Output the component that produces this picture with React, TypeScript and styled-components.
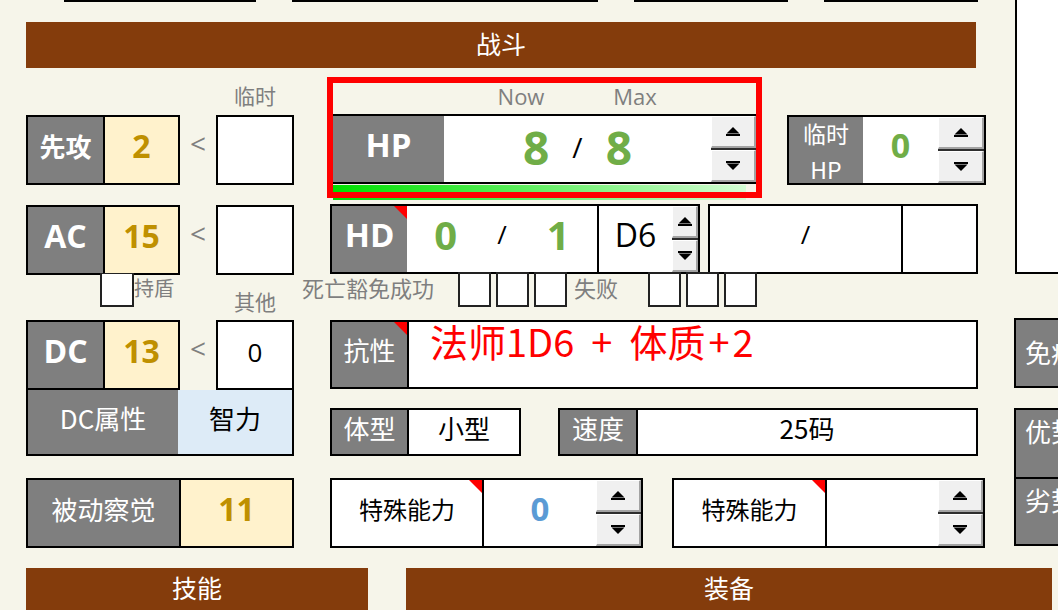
import React from "react";
import styled, { createGlobalStyle } from "styled-components";

const CJK = `"Noto Sans CJK SC", "Noto Sans", sans-serif`;
const LATIN = `"Open Sans", "Noto Sans CJK SC", sans-serif`;

const GREY = "#7f7f7f";
const BROWN = "#843c0c";

const GlobalStyle = createGlobalStyle`
  html, body {
    margin: 0;
    padding: 0;
    background: #f6f5ea;
  }
  * {
    box-sizing: border-box;
  }
`;

const Page = styled.div`
  width: 1058px;
  height: 610px;
  overflow: hidden;
  background: #f6f5ea;
  font-family: ${CJK};
  display: flex;
  flex-direction: column;
`;

const Upper = styled.div`
  display: flex;
  height: 568px;
`;

const Main = styled.div`
  width: 1014px;
  flex-shrink: 0;
  display: flex;
  flex-direction: column;
`;

const RuleStrip = styled.div`
  display: flex;
  gap: 36px;
  padding-left: 64px;
  height: 2px;
`;

const Rule = styled.div<{ $w: number }>`
  width: ${(p) => p.$w}px;
  height: 2px;
  background: #000;
`;

const SectionBar = styled.div<{ $w: number }>`
  width: ${(p) => p.$w}px;
  height: 100%;
  padding-bottom: 4px;
  background: ${BROWN};
  color: #fff;
  font-size: 25px;
  display: flex;
  align-items: center;
  justify-content: center;
`;

const CombatBar = styled.div`
  margin: 20px 0 0 26px;
  height: 46px;
  display: flex;
`;

const Combat = styled.div`
  display: flex;
  align-items: flex-start;
`;

const LeftCol = styled.div`
  margin-left: 26px;
  width: 268px;
  display: flex;
  flex-direction: column;
`;

const MidCol = styled.div`
  margin-left: 33px;
  display: flex;
  flex-direction: column;
`;

const Caption = styled.div`
  height: 47px;
  display: flex;
  align-items: flex-end;
  padding: 0 0 8px 190px;
  span {
    width: 78px;
    text-align: center;
  }
`;

const GreyText = styled.span<{ $size?: number }>`
  color: ${GREY};
  font-size: ${(p) => p.$size ?? 21}px;
  line-height: 24px;
  white-space: nowrap;
`;

const StatRow = styled.div<{ $top?: number }>`
  display: flex;
  height: 70px;
  margin-top: ${(p) => p.$top ?? 0}px;
`;

const Frame = styled.div<{ $w: number }>`
  width: ${(p) => p.$w}px;
  border: 2px solid #000;
  display: flex;
  flex-shrink: 0;
`;

const Label = styled.div<{ $w: number; $bold?: boolean; $latin?: boolean; $size?: number }>`
  position: relative;
  width: ${(p) => p.$w}px;
  flex-shrink: 0;
  padding-bottom: 10px;
  background: ${GREY};
  color: #fff;
  display: flex;
  align-items: center;
  justify-content: center;
  font-family: ${(p) => (p.$latin ? LATIN : CJK)};
  font-weight: ${(p) => (p.$bold ? 700 : 400)};
  font-size: ${(p) => p.$size ?? 26}px;
`;

const Value = styled.div<{
  $bg?: string;
  $color?: string;
  $size?: number;
  $bold?: boolean;
  $latin?: boolean;
  $w?: number;
  $line?: boolean;
}>`
  position: relative;
  ${(p) => (p.$w ? `width: ${p.$w}px; flex-shrink: 0;` : "flex: 1;")}
  padding-bottom: 10px;
  background: ${(p) => p.$bg ?? "#fff"};
  color: ${(p) => p.$color ?? "#000"};
  font-family: ${(p) => (p.$latin ? LATIN : CJK)};
  font-weight: ${(p) => (p.$bold ? 700 : 400)};
  font-size: ${(p) => p.$size ?? 26}px;
  border-left: ${(p) => (p.$line === false ? "none" : "2px solid #000")};
  display: flex;
  align-items: center;
  justify-content: center;
`;

const Lt = styled.div`
  width: 36px;
  padding-bottom: 14px;
  display: flex;
  align-items: center;
  justify-content: center;
  color: ${GREY};
  font-family: ${LATIN};
  font-size: 28px;
`;

const TempBox = styled.div`
  width: 78px;
  padding-bottom: 6px;
  border: 2px solid #000;
  background: #fff;
  display: flex;
  align-items: center;
  justify-content: center;
  font-family: ${LATIN};
  font-size: 26px;
`;

const ShieldRow = styled.div`
  margin-top: -3px;
  height: 48px;
  display: flex;
`;

const Check = styled.div`
  width: 33px;
  height: 35px;
  border: 2px solid #222;
  background: #fff;
  flex-shrink: 0;
`;

const ShieldCheck = styled(Check)`
  margin-left: 74px;
  width: 34px;
`;

const ShieldLabel = styled(GreyText)`
  width: 82px;
  margin-top: 4px;
`;

const OtherLabel = styled(GreyText)`
  width: 78px;
  text-align: center;
  align-self: flex-end;
  margin-bottom: 7px;
`;

const AttrRow = styled.div`
  width: 268px;
  height: 66px;
  border: 2px solid #000;
  border-top: none;
  display: flex;
`;

const PassiveRow = styled(Frame)`
  margin-top: 22px;
  height: 70px;
`;

const HPRowWrap = styled.div`
  margin-top: 9px;
  display: flex;
  align-items: flex-start;
`;

const HPFrame = styled.div`
  position: relative;
  width: 435px;
  height: 121px;
  padding: 6px 0 0 6px;
`;

const RedOutline = styled.div`
  position: absolute;
  inset: 0;
  border: 6px solid #ff0000;
  pointer-events: none;
`;

const HeadRow = styled.div`
  height: 31px;
  padding-bottom: 6px;
  display: flex;
  align-items: center;
`;

const HeadLabel = styled(GreyText)<{ $left: number }>`
  width: 60px;
  margin-left: ${(p) => p.$left}px;
  text-align: center;
  font-family: ${LATIN};
  font-size: 22px;
`;

const HPBar = styled.div`
  width: 423px;
  height: 70px;
  border-top: 2px solid #000;
  border-bottom: 2px solid #000;
  display: flex;
`;

const Fraction = styled.div<{ $gap: number; $drop?: number }>`
  display: flex;
  align-items: center;
  gap: ${(p) => p.$gap}px;
  margin-top: ${(p) => p.$drop ?? 0}px;
`;

const Slash = styled.span<{ $size: number }>`
  color: #000;
  font-weight: 400;
  font-size: ${(p) => p.$size}px;
`;

const LifeBar = styled.div`
  margin-top: 1px;
  width: 413px;
  height: 15px;
  background: linear-gradient(to right, #00e000, #5cee5c 45%, #d4fdd4);
`;

const TempHPBox = styled(Frame)`
  margin: 38px 0 0 25px;
  height: 70px;
`;

const TwoLine = styled(Label)`
  flex-direction: column;
  padding: 1px 0 0;
  font-size: 23px;
  line-height: 36px;
`;

const RowLine = styled.div<{ $top: number; $h: number }>`
  margin: ${(p) => p.$top}px 0 0 3px;
  height: ${(p) => p.$h}px;
  display: flex;
`;

const DeathRow = styled.div`
  margin-top: -2px;
  height: 35px;
  display: flex;
  align-items: center;
`;

const Checks = styled.div<{ $left: number }>`
  display: flex;
  gap: 5px;
  margin-left: ${(p) => p.$left}px;
`;

const DeathLabel = styled(GreyText)`
  margin: 0 0 6px -25px;
  width: 132px;
  font-size: 22px;
`;

const FailLabel = styled(GreyText)`
  margin: 0 0 6px 7px;
  width: 44px;
  font-size: 22px;
`;

const ResistText = styled(Value)`
  justify-content: flex-start;
  align-items: flex-start;
  padding: 1px 0 0 21px;
  font-size: 38px;
  line-height: 36px;
`;

const Plus = styled.span<{ $gap: number }>`
  margin: 0 ${(p) => p.$gap}px;
`;

const Corner = styled.span`
  position: absolute;
  top: 0;
  right: 0;
  width: 0;
  height: 0;
  border-top: 13px solid #ff0000;
  border-left: 13px solid transparent;
`;

const WhiteLabel = styled(Label)`
  background: #fff;
  color: #000;
  font-size: 24px;
`;

const Spinner = styled.div<{ $w: number }>`
  width: ${(p) => p.$w}px;
  flex-shrink: 0;
  display: flex;
  flex-direction: column;
  background: #f0f0f0;
`;

const SpinButton = styled.div`
  flex: 1;
  display: flex;
  align-items: center;
  justify-content: center;
  background: #f0f0f0;
  border-top: 1px solid #ffffff;
  border-left: 1px solid #ffffff;
  border-right: 2px solid #a3a3a3;
  border-bottom: 2px solid #a3a3a3;
`;

const SpinSep = styled.div`
  height: 2px;
  background: #2e2e2e;
`;

const RightCol = styled.div`
  width: 130px;
  flex-shrink: 0;
  display: flex;
  flex-direction: column;
`;

const SheetEdge = styled.div`
  height: 274px;
  margin-left: 1px;
  background: #fff;
  border-left: 2px solid #000;
  border-bottom: 2px solid #000;
`;

const SideTag = styled.div<{ $top?: number; $h: number; $align?: string }>`
  margin-top: ${(p) => p.$top ?? 0}px;
  height: ${(p) => p.$h}px;
  background: ${GREY};
  color: #fff;
  font-size: 26px;
  line-height: 30px;
  display: flex;
  align-items: ${(p) => p.$align ?? "center"};
  padding: ${(p) => (p.$align ? "6px 0 0 9px" : "0 0 2px 9px")};
`;

const SideStack = styled.div`
  margin-top: 20px;
  border: 2px solid #000;
  display: flex;
  flex-direction: column;
  ${SideTag} + ${SideTag} {
    border-top: 2px solid #000;
  }
`;

const ImmuneTag = styled(SideTag)`
  border: 2px solid #000;
`;

const BottomBars = styled.div`
  height: 42px;
  display: flex;
  gap: 38px;
  padding-left: 26px;
`;

const UpIcon = () => (
  <svg width="14" height="9" viewBox="0 0 14 9">
    <polygon points="7,0 13.5,6.5 0.5,6.5" fill="#000" />
    <rect x="0" y="7" width="14" height="2" fill="#000" />
  </svg>
);

const DownIcon = () => (
  <svg width="14" height="9" viewBox="0 0 14 9">
    <rect x="0" y="0" width="14" height="2" fill="#000" />
    <polygon points="0.5,2.5 13.5,2.5 7,9" fill="#000" />
  </svg>
);

const Spin = ({ w }: { w: number }) => (
  <Spinner $w={w}>
    <SpinButton>
      <UpIcon />
    </SpinButton>
    <SpinSep />
    <SpinButton>
      <DownIcon />
    </SpinButton>
  </Spinner>
);

const GOLD = "#bf9000";
const CREAM = "#fff2cc";
const GREEN = "#70ad47";

type StatProps = { label: string; value: string; temp?: string; top?: number; latin?: boolean };

const Stat = ({ label, value, temp, top, latin }: StatProps) => (
  <StatRow $top={top}>
    <Frame $w={154}>
      <Label $w={75} $bold $latin={latin} $size={latin ? 32 : 26}>
        {label}
      </Label>
      <Value $bg={CREAM} $color={GOLD} $bold $latin $size={32}>
        {value}
      </Value>
    </Frame>
    <Lt>&lt;</Lt>
    <TempBox>{temp}</TempBox>
  </StatRow>
);

const App = () => {
  return (
    <Page>
      <GlobalStyle />
      <Upper>
        <Main>
          <RuleStrip>
            <Rule $w={192} />
            <Rule $w={306} />
            <Rule $w={154} />
            <Rule $w={154} />
          </RuleStrip>
          <CombatBar>
            <SectionBar $w={950}>战斗</SectionBar>
          </CombatBar>
          <Combat>
            <LeftCol>
              <Caption>
                <GreyText>临时</GreyText>
              </Caption>
              <Stat label="先攻" value="2" />
              <Stat label="AC" value="15" latin top={20} />
              <ShieldRow>
                <ShieldCheck />
                <ShieldLabel $size={20}>持盾</ShieldLabel>
                <OtherLabel>其他</OtherLabel>
              </ShieldRow>
              <Stat label="DC" value="13" temp="0" latin />
              <AttrRow>
                <Label $w={150}>DC属性</Label>
                <Value $bg="#ddebf7" $line={false}>
                  智力
                </Value>
              </AttrRow>
              <PassiveRow $w={268}>
                <Label $w={151}>被动察觉</Label>
                <Value $bg={CREAM} $color={GOLD} $bold $latin $size={32}>
                  11
                </Value>
              </PassiveRow>
            </LeftCol>

            <MidCol>
              <HPRowWrap>
                <HPFrame>
                  <HeadRow>
                    <HeadLabel $left={158}>Now</HeadLabel>
                    <HeadLabel $left={54}>Max</HeadLabel>
                  </HeadRow>
                  <HPBar>
                    <Label $w={111} $bold $latin $size={33}>
                      HP
                    </Label>
                    <Value $color={GREEN} $bold $latin $size={46} $line={false}>
                      <Fraction $gap={23} $drop={6}>
                        <span>8</span>
                        <Slash $size={28}>/</Slash>
                        <span>8</span>
                      </Fraction>
                    </Value>
                    <Spin w={45} />
                  </HPBar>
                  <LifeBar />
                  <RedOutline />
                </HPFrame>
                <TempHPBox $w={199}>
                  <TwoLine $w={74}>
                    <span>临时</span>
                    <span>HP</span>
                  </TwoLine>
                  <Value $w={75} $color={GREEN} $bold $latin $size={34} $line={false}>
                    0
                  </Value>
                  <Spin w={46} />
                </TempHPBox>
              </HPRowWrap>

              <RowLine $top={6} $h={70}>
                <Frame $w={370}>
                  <Label $w={75} $bold $latin $size={33}>
                    HD
                    <Corner />
                  </Label>
                  <Value $w={190} $color={GREEN} $bold $latin $size={40} $line={false}>
                    <Fraction $gap={40}>
                      <span>0</span>
                      <Slash $size={26}>/</Slash>
                      <span>1</span>
                    </Fraction>
                  </Value>
                  <Value $w={75} $latin $size={32}>
                    D6
                  </Value>
                  <Spin w={26} />
                </Frame>
                <Frame $w={270} style={{ marginLeft: 8 }}>
                  <Value $w={191} $latin $size={26} $line={false}>
                    /
                  </Value>
                  <Value />
                </Frame>
              </RowLine>

              <DeathRow>
                <DeathLabel>死亡豁免成功</DeathLabel>
                <Checks $left={24}>
                  <Check />
                  <Check />
                  <Check />
                </Checks>
                <FailLabel>失败</FailLabel>
                <Checks $left={30}>
                  <Check />
                  <Check />
                  <Check />
                </Checks>
              </DeathRow>

              <RowLine $top={13} $h={69}>
                <Frame $w={648}>
                  <Label $w={75}>
                    抗性
                    <Corner />
                  </Label>
                  <ResistText $color="#ff0000">
                    法师1D6<Plus $gap={17}>+</Plus>体质<Plus $gap={3}>+</Plus>2
                  </ResistText>
                </Frame>
              </RowLine>

              <RowLine $top={19} $h={48}>
                <Frame $w={191}>
                  <Label $w={75}>体型</Label>
                  <Value>小型</Value>
                </Frame>
                <Frame $w={420} style={{ marginLeft: 37 }}>
                  <Label $w={76}>速度</Label>
                  <Value>25码</Value>
                </Frame>
              </RowLine>

              <RowLine $top={22} $h={70}>
                <Frame $w={313}>
                  <WhiteLabel $w={150}>
                    特殊能力
                    <Corner />
                  </WhiteLabel>
                  <Value $w={114} $color="#5b9bd5" $bold $latin $size={33}>
                    0
                  </Value>
                  <Spin w={45} />
                </Frame>
                <Frame $w={313} style={{ marginLeft: 29 }}>
                  <WhiteLabel $w={151}>
                    特殊能力
                    <Corner />
                  </WhiteLabel>
                  <Value $w={113} />
                  <Spin w={45} />
                </Frame>
              </RowLine>
            </MidCol>
          </Combat>
        </Main>

        <RightCol>
          <SheetEdge />
          <ImmuneTag $top={44} $h={70}>
            免疫
          </ImmuneTag>
          <SideStack>
            <SideTag $h={67} $align="flex-start">
              优势
            </SideTag>
            <SideTag $h={67} $align="flex-start">
              劣势
            </SideTag>
          </SideStack>
        </RightCol>
      </Upper>

      <BottomBars>
        <SectionBar $w={342}>技能</SectionBar>
        <SectionBar $w={646}>装备</SectionBar>
      </BottomBars>
    </Page>
  );
};

export default App;
